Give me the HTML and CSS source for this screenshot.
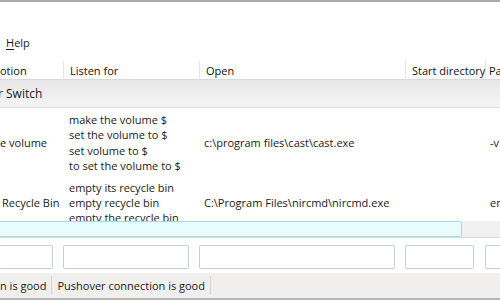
FILE: index.html
```html
<!DOCTYPE html>
<html lang="en">
<head>
  <meta charset="UTF-8">
  <title>Commands</title>
  <link rel="stylesheet" href="styles.css">
</head>
<body>
  <div class="window">
    <div class="toolbar"></div>

    <div class="menubar">
      <span class="menu-item"><u>H</u>elp</span>
    </div>

    <div class="list">
      <div class="list-header">
        <div class="col c1"><span class="clip">otion</span></div>
        <div class="col c2">Listen for</div>
        <div class="col c3">Open</div>
        <div class="col c4">Start directory</div>
        <div class="col c5">Pa</div>
      </div>

      <div class="group-row"><span class="clip-r">r Switch</span></div>

      <div class="list-body">
        <div class="row">
          <div class="cell c1 first">e volume</div>
          <div class="cell c2">
            make the volume $<br>
            set the volume to $<br>
            set volume to $<br>
            to set the volume to $
          </div>
          <div class="cell c3">c:\program files\cast\cast.exe</div>
          <div class="cell c4"></div>
          <div class="cell c5">-v</div>
        </div>
        <div class="row">
          <div class="cell c1 first indent">Recycle Bin</div>
          <div class="cell c2">
            empty its recycle bin<br>
            empty recycle bin<br>
            empty the recycle bin
          </div>
          <div class="cell c3">C:\Program Files\nircmd\nircmd.exe</div>
          <div class="cell c4"></div>
          <div class="cell c5">en</div>
        </div>
      </div>

      <div class="edit-row">
        <div class="edit-box"></div>
      </div>
    </div>

    <div class="inputs">
      <input class="field f1" type="text">
      <input class="field f2" type="text">
      <input class="field f3" type="text">
      <input class="field f4" type="text">
      <input class="field f5" type="text">
    </div>

    <div class="statusbar">
      <div class="status"><span class="clip">n is good</span></div>
      <div class="status">Pushover connection is good</div>
    </div>
  </div>
</body>
</html>
```

FILE: styles.css
```css
body {
  margin: 0;
  width: 500px;
  height: 300px;
  overflow: hidden;
  background: #fff;
  font-family: "Segoe UI", "Open Sans", sans-serif;
  font-size: 11px;
  color: #1a1a1a;
}

.window {
  border-top: 2px solid #a9a9a9;
  height: 298px;
  display: flex;
  flex-direction: column;
}

.toolbar {
  height: 30px;
}

.menubar {
  height: 20px;
  display: flex;
  align-items: center;
  padding-left: 6px;
}
.menubar u {
  text-decoration-thickness: 1px;
  text-underline-offset: 2px;
}

.list {
  margin-top: 9px;
}

.list-header {
  display: grid;
  grid-template-columns: 63px 136px 206px 80px 1fr;
  height: 18px;
  border-bottom: 1px solid #d9d9d9;
  color: #111;
}
.list-header .col {
  display: flex;
  align-items: center;
  padding-left: 6px;
  border-left: 1px solid #e4e4e4;
  white-space: nowrap;
  overflow: hidden;
}
.list-header .c1 {
  border-left: none;
  padding-left: 0;
}
.list-header .c5 {
  padding-left: 3px;
}

.group-row {
  height: 27px;
  display: flex;
  align-items: center;
  background: linear-gradient(#e8e8e8, #f4f4f4);
  border-bottom: 1px solid #dedede;
  font-size: 12px;
}
.clip-r {
  margin-left: -2px;
}

.list-body {
  height: 113px;
  overflow: hidden;
}

.row {
  display: grid;
  grid-template-columns: 63px 136px 206px 80px 1fr;
  padding: 4px 0 2px;
  line-height: 15.4px;
}
.cell {
  display: flex;
  flex-direction: column;
  justify-content: center;
  padding-left: 6px;
  white-space: nowrap;
  overflow: hidden;
}
.cell.c2 {
  display: block;
}
.cell.first {
  padding-left: 0;
}
.cell.indent {
  padding-left: 2px;
}
.cell.c3 {
  padding-left: 5px;
}
.cell.c5 {
  padding-left: 5px;
}

.edit-row {
  height: 16px;
  display: flex;
  background: #f0f0f0;
  border-bottom: 1px solid #dcdcdc;
  margin-bottom: 1px;
}
.edit-box {
  width: 462px;
  background: #e9fcff;
  border: 1px solid #a5d9ea;
  border-left: none;
  border-radius: 0 2px 2px 0;
  box-sizing: border-box;
}

.inputs {
  display: flex;
  padding-top: 6px;
  height: 34px;
  box-sizing: border-box;
}
.field {
  flex-shrink: 0;
  box-sizing: border-box;
  height: 24px;
  border: 1px solid #c9cdd6;
  border-radius: 2px;
  background: #fff;
  margin: 0;
  padding: 0;
}
.f1 { width: 54px; margin-left: -1px; }
.f2 { width: 126px; margin-left: 10px; }
.f3 { width: 196px; margin-left: 10px; }
.f4 { width: 69px; margin-left: 10px; }
.f5 { width: 40px; margin-left: 11px; }

.statusbar {
  flex: 1;
  display: flex;
  background: #f0efee;
  border-bottom: 2px solid #b5b5b5;
  align-items: stretch;
}
.status {
  display: flex;
  align-items: center;
  padding: 0 5px;
  border-right: 1px solid #d4d4d4;
  margin: 3px 0;
  font-size: 11px;
}
.status:first-child {
  padding-left: 0;
}
```
